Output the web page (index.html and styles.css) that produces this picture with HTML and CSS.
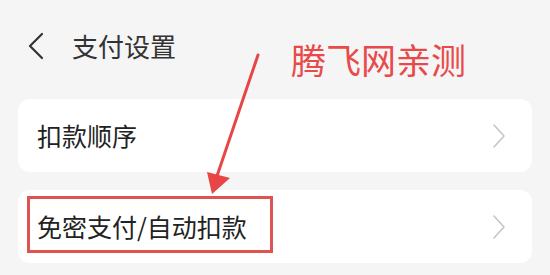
FILE: index.html
```html
<!DOCTYPE html>
<html lang="zh-CN">
<head>
    <meta charset="UTF-8">
    <meta name="viewport" content="width=device-width, initial-scale=1.0">
    <title>支付设置</title>
    <link rel="stylesheet" href="styles.css">
</head>
<body>
    <div class="page">
        <!-- Header -->
        <div class="header">
            <svg class="back" width="18" height="28" viewBox="0 0 18 28">
                <polyline points="15,2 3,14 15,26" fill="none" stroke="#333" stroke-width="2.2" stroke-linecap="round" stroke-linejoin="round"/>
            </svg>
            <span class="title">支付设置</span>
        </div>

        <!-- Settings list -->
        <div class="list">
            <div class="item">
                <span class="label">扣款顺序</span>
                <svg class="arrow-right" width="14" height="24" viewBox="0 0 14 24">
                    <polyline points="2,1 12,12 2,23" fill="none" stroke="#c4c4c4" stroke-width="1.5" stroke-linecap="round" stroke-linejoin="round"/>
                </svg>
            </div>
            <div class="item">
                <span class="label">免密支付/自动扣款</span>
                <svg class="arrow-right" width="14" height="24" viewBox="0 0 14 24">
                    <polyline points="2,1 12,12 2,23" fill="none" stroke="#c4c4c4" stroke-width="1.5" stroke-linecap="round" stroke-linejoin="round"/>
                </svg>
            </div>
        </div>

        <!-- Annotation overlay -->
        <div class="note">腾飞网亲测</div>
        <div class="mark"></div>
        <svg class="pointer" width="550" height="275" viewBox="0 0 550 275">
            <line x1="258" y1="55" x2="217" y2="176" stroke="#e84545" stroke-width="3" stroke-linecap="round"/>
            <polygon points="212,194 207,172 230,178" fill="#e84545"/>
        </svg>
    </div>
</body>
</html>
```

FILE: styles.css
```css
* {
    margin: 0;
    padding: 0;
    box-sizing: border-box;
}

body {
    background-color: #f5f5f5;
    color: #222;
    font-family: "Noto Sans CJK SC", "Noto Sans", sans-serif;
}

.page {
    position: relative;
    width: 550px;
    height: 275px;
    overflow: hidden;
}

/* Header */
.header {
    display: flex;
    align-items: center;
    height: 92px;
    padding-left: 27px;
    padding-bottom: 1px;
}

.back {
    margin-right: 27px;
}

.title {
    font-size: 26px;
    line-height: 1;
    color: #333;
}

/* List */
.list {
    display: flex;
    flex-direction: column;
    gap: 18px;
    padding: 7px 18px 0;
}

.item {
    display: flex;
    align-items: center;
    justify-content: space-between;
    height: 73px;
    padding: 0 26px 0 19px;
    background-color: #fff;
    border-radius: 12px;
}

.label {
    font-size: 25px;
    line-height: 1;
    color: #222;
}

/* Annotation */
.note {
    position: absolute;
    left: 291px;
    top: 41px;
    font-size: 35px;
    line-height: 1;
    color: #e84a4a;
}

.mark {
    position: absolute;
    left: 27px;
    top: 196px;
    width: 246px;
    height: 57px;
    border: 3px solid #e05353;
}

.pointer {
    position: absolute;
    left: 0;
    top: 0;
}
```
